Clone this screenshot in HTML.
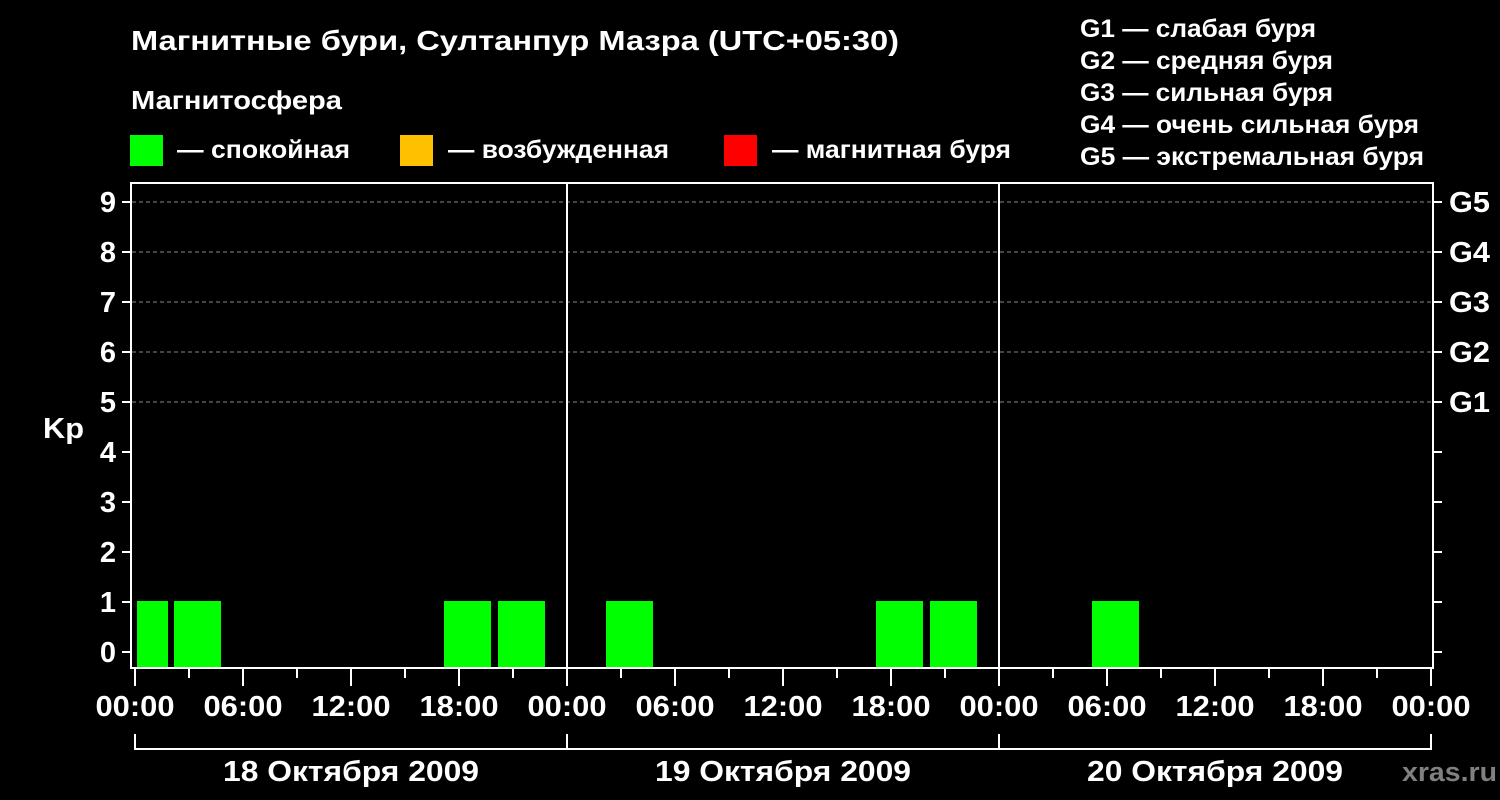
<!DOCTYPE html>
<html><head><meta charset="utf-8"><style>
html,body{margin:0;padding:0;background:#000;width:1500px;height:800px;overflow:hidden}
svg{display:block}
text{font-family:"Liberation Sans",Arial,sans-serif;font-weight:bold;fill:#fff}
</style></head><body>
<svg width="1500" height="800" viewBox="0 0 1500 800">
<rect width="1500" height="800" fill="#000"/>
<text x="131" y="50" font-size="28" textLength="768" lengthAdjust="spacingAndGlyphs">Магнитные бури, Султанпур Мазра (UTC+05:30)</text>
<text x="131" y="109" font-size="26" textLength="211" lengthAdjust="spacingAndGlyphs">Магнитосфера</text>
<rect x="130" y="135" width="33" height="31" fill="#00ff00"/>
<text x="177" y="158" font-size="25" textLength="173" lengthAdjust="spacingAndGlyphs">— спокойная</text>
<rect x="400" y="135" width="33" height="31" fill="#ffc000"/>
<text x="448" y="158" font-size="25" textLength="221" lengthAdjust="spacingAndGlyphs">— возбужденная</text>
<rect x="724" y="135" width="33" height="31" fill="#ff0000"/>
<text x="772" y="158" font-size="25" textLength="239" lengthAdjust="spacingAndGlyphs">— магнитная буря</text>
<g font-size="25">
<text x="1080" y="37" textLength="236" lengthAdjust="spacingAndGlyphs">G1 — слабая буря</text>
<text x="1080" y="69" textLength="253" lengthAdjust="spacingAndGlyphs">G2 — средняя буря</text>
<text x="1080" y="101" textLength="253" lengthAdjust="spacingAndGlyphs">G3 — сильная буря</text>
<text x="1080" y="133" textLength="339" lengthAdjust="spacingAndGlyphs">G4 — очень сильная буря</text>
<text x="1080" y="165" textLength="344" lengthAdjust="spacingAndGlyphs">G5 — экстремальная буря</text>
</g>
<g stroke="#888" stroke-width="1" stroke-dasharray="4,3">
<line x1="132" y1="202" x2="1432" y2="202"/><line x1="132" y1="252" x2="1432" y2="252"/>
<line x1="132" y1="302" x2="1432" y2="302"/><line x1="132" y1="352" x2="1432" y2="352"/>
<line x1="132" y1="402" x2="1432" y2="402"/>
</g>
<g fill="#00ff00">
<rect x="137" y="601" width="31" height="67"/><rect x="174" y="601" width="47" height="67"/>
<rect x="444" y="601" width="47" height="67"/><rect x="498" y="601" width="47" height="67"/>
<rect x="606" y="601" width="47" height="67"/><rect x="876" y="601" width="47" height="67"/>
<rect x="930" y="601" width="47" height="67"/><rect x="1092" y="601" width="47" height="67"/>
</g>
<g stroke="#fff" stroke-width="2" fill="none">
<rect x="131" y="183" width="1302" height="485"/>
<line x1="567" y1="183" x2="567" y2="668"/><line x1="999" y1="183" x2="999" y2="668"/>
<path d="M122 202H131M122 252H131M122 302H131M122 352H131M122 402H131M122 452H131M122 502H131M122 552H131M122 602H131M122 652H131"/>
<path d="M1433 202H1442M1433 252H1442M1433 302H1442M1433 352H1442M1433 402H1442M1433 452H1442M1433 502H1442M1433 552H1442M1433 602H1442M1433 652H1442"/>
<path d="M135 668V686M243 668V686M351 668V686M459 668V686M567 668V686M675 668V686M783 668V686M891 668V686M999 668V686M1107 668V686M1215 668V686M1323 668V686M1431 668V686"/>
<path d="M189 668V678M297 668V678M405 668V678M513 668V678M621 668V678M729 668V678M837 668V678M945 668V678M1053 668V678M1161 668V678M1269 668V678M1377 668V678"/>
<path d="M135 734V749H1431V734M567 734V749M999 734V749"/>
</g>
<g font-size="29" text-anchor="end">
<text x="116" y="212">9</text><text x="116" y="262">8</text><text x="116" y="312">7</text>
<text x="116" y="362">6</text><text x="116" y="412">5</text><text x="116" y="462">4</text>
<text x="116" y="512">3</text><text x="116" y="562">2</text><text x="116" y="612">1</text>
<text x="116" y="662">0</text>
</g>
<text x="43" y="438" font-size="29" textLength="41" lengthAdjust="spacingAndGlyphs">Kp</text>
<g font-size="29">
<text x="1449" y="212" textLength="41" lengthAdjust="spacingAndGlyphs">G5</text>
<text x="1449" y="262" textLength="41" lengthAdjust="spacingAndGlyphs">G4</text>
<text x="1449" y="312" textLength="41" lengthAdjust="spacingAndGlyphs">G3</text>
<text x="1449" y="362" textLength="41" lengthAdjust="spacingAndGlyphs">G2</text>
<text x="1449" y="412" textLength="41" lengthAdjust="spacingAndGlyphs">G1</text>
</g>
<g font-size="29" text-anchor="middle">
<text x="135" y="716" textLength="79" lengthAdjust="spacingAndGlyphs">00:00</text>
<text x="243" y="716" textLength="79" lengthAdjust="spacingAndGlyphs">06:00</text>
<text x="351" y="716" textLength="79" lengthAdjust="spacingAndGlyphs">12:00</text>
<text x="459" y="716" textLength="79" lengthAdjust="spacingAndGlyphs">18:00</text>
<text x="567" y="716" textLength="79" lengthAdjust="spacingAndGlyphs">00:00</text>
<text x="675" y="716" textLength="79" lengthAdjust="spacingAndGlyphs">06:00</text>
<text x="783" y="716" textLength="79" lengthAdjust="spacingAndGlyphs">12:00</text>
<text x="891" y="716" textLength="79" lengthAdjust="spacingAndGlyphs">18:00</text>
<text x="999" y="716" textLength="79" lengthAdjust="spacingAndGlyphs">00:00</text>
<text x="1107" y="716" textLength="79" lengthAdjust="spacingAndGlyphs">06:00</text>
<text x="1215" y="716" textLength="79" lengthAdjust="spacingAndGlyphs">12:00</text>
<text x="1323" y="716" textLength="79" lengthAdjust="spacingAndGlyphs">18:00</text>
<text x="1431" y="716" textLength="79" lengthAdjust="spacingAndGlyphs">00:00</text>
</g>
<g font-size="29" text-anchor="middle">
<text x="351" y="781" textLength="256" lengthAdjust="spacingAndGlyphs">18 Октября 2009</text>
<text x="783" y="781" textLength="256" lengthAdjust="spacingAndGlyphs">19 Октября 2009</text>
<text x="1215" y="781" textLength="256" lengthAdjust="spacingAndGlyphs">20 Октября 2009</text>
</g>
<text x="1402" y="781" font-size="27" style="fill:#808080" textLength="95" lengthAdjust="spacingAndGlyphs">xras.ru</text>
</svg>
</body></html>
